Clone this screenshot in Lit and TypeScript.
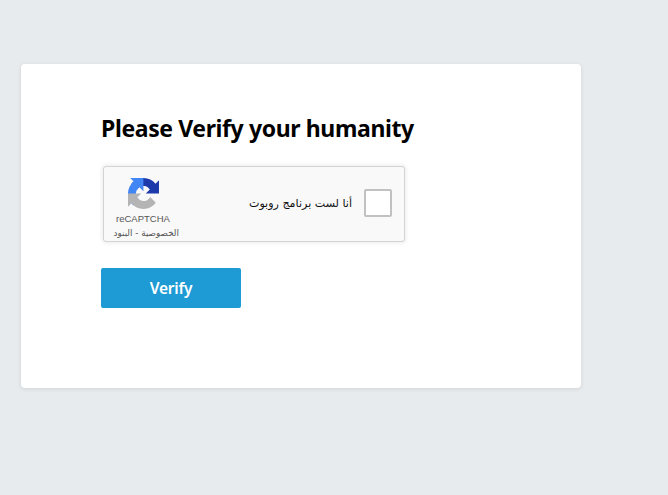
import { LitElement, html, css } from "lit";
import { customElement } from "lit/decorators.js";

@customElement("recaptcha-box")
class RecaptchaBox extends LitElement {
  static styles = css`
    :host { display: block; width: 302px; }
    .box {
      box-sizing: border-box; width: 302px; height: 76px;
      border: 1px solid #d3d3d3; border-radius: 3px; background: #f9f9f9;
      box-shadow: 0 0 4px 1px rgba(0, 0, 0, 0.08);
      display: flex; align-items: center;
      padding: 0 12px 2px 11px;
    }
    .brand { width: 64px; height: 72px; flex: none; font-family: "Liberation Sans", "DejaVu Sans", sans-serif; color: #555; white-space: nowrap; }
    .logo { display: block; width: 31px; height: 31px; margin: 11px 0 0 13px; }
    .name { font-size: 9.5px; line-height: 10px; margin: 5px 0 0 1px; }
    .links { font: 8.8px/12px "DejaVu Sans", sans-serif; margin-top: 3px; direction: rtl; }
    .label { flex: 1; direction: rtl; font: 11.1px/17px "DejaVu Sans", sans-serif; color: #111; margin-right: 12px; white-space: nowrap; }
    .check { box-sizing: border-box; width: 28px; height: 28px; border: 2px solid #c1c1c1; border-radius: 2px; background: #fff; flex: none; }
  `;
  render() {
    return html`
      <div class="box">
        <div class="brand">
          <svg class="logo" viewBox="0 0 64 64">
            <path fill="#1c3aa9" d="M64 31.955l-.033-1.37V4.687l-7.16 7.16C50.948 4.674 42.033.093 32.05.093c-10.4 0-19.622 4.96-25.458 12.64l11.736 11.86a15.55 15.55 0 0 1 4.754-5.334c2.05-1.6 4.952-2.906 8.968-2.906.485 0 .86.057 1.135.163 4.976.393 9.288 3.14 11.828 7.124l-8.307 8.307L64 31.953"/>
            <path fill="#4285f4" d="M31.862.094l-1.37.033H4.594l7.16 7.16C4.58 13.147 0 22.06 0 32.046c0 10.4 4.96 19.622 12.64 25.458L24.5 45.768a15.55 15.55 0 0 1-5.334-4.754c-1.6-2.05-2.906-4.952-2.906-8.968 0-.485.057-.86.163-1.135.393-4.976 3.14-9.288 7.124-11.828l8.307 8.307L31.86.095"/>
            <path fill="#b4b4b4" d="M.001 32.045l.033 1.37v25.898l7.16-7.16c5.86 7.173 14.774 11.754 24.76 11.754 10.4 0 19.622-4.96 25.458-12.64l-11.736-11.86a15.55 15.55 0 0 1-4.754 5.334c-2.05 1.6-4.952 2.906-8.968 2.906-.485 0-.86-.057-1.135-.163-4.976-.393-9.288-3.14-11.828-7.124l8.307-8.307c-10.522.04-22.4.066-27.295-.005"/>
          </svg>
          <div class="name">reCAPTCHA</div>
          <div class="links">الخصوصية - البنود</div>
        </div>
        <div class="label">أنا لست برنامج روبوت</div>
        <div class="check"></div>
      </div>
    `;
  }
}

@customElement("app-root")
class AppRoot extends LitElement {
  static styles = css`
    :host { display: block; box-sizing: border-box; height: 495px; padding: 64px 0 0 21px; background: #e7ebee; overflow: hidden; }
    .card { box-sizing: border-box; width: 560px; height: 324px; padding: 47px 80px; background: #fff; border-radius: 4px; box-shadow: 0 1px 4px rgba(0, 0, 0, 0.1); }
    h1 { margin: 0; font: 700 23px/34px "Noto Sans", sans-serif; letter-spacing: -0.38px; color: #000; white-space: nowrap; }
    recaptcha-box { margin: 21px 0 0 2px; }
    button { display: block; margin: 26px 0 0; padding: 0; width: 140px; height: 40px; border: 0; border-radius: 2px; background: #1e9bd5; color: #fff; font: 600 15.5px/40px "Noto Sans", sans-serif; letter-spacing: -0.2px; }
  `;
  render() {
    return html`
      <div class="card">
        <h1>Please Verify your humanity</h1>
        <recaptcha-box></recaptcha-box>
        <button>Verify</button>
      </div>
    `;
  }
}
